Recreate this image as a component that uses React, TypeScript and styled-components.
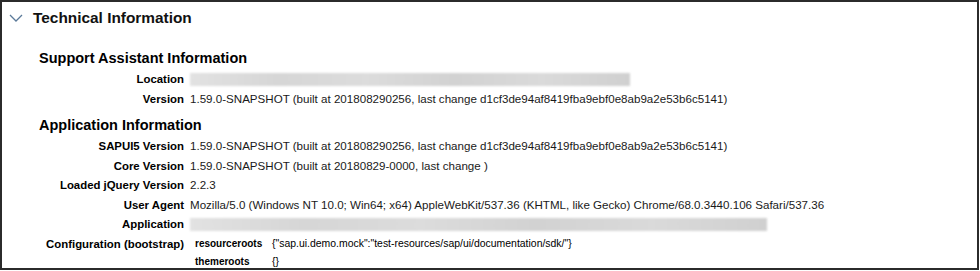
import React, { FC } from 'react';
import styled, { createGlobalStyle } from 'styled-components';

const GlobalStyle = createGlobalStyle`
  body {
    margin: 0;
    background: #ffffff;
    font-family: "Liberation Sans", Arial, sans-serif;
    color: #000000;
  }
`;

const Panel = styled.div`
  box-sizing: border-box;
  width: 979px;
  height: 270px;
  border: 2px solid #2b2b2b;
  background: #ffffff;
  overflow: hidden;
`;

const Header = styled.div`
  display: flex;
  align-items: center;
  height: 31px;
  padding-left: 7px;
  gap: 10px;
`;

const Title = styled.span`
  font-size: 15.4px;
  font-weight: bold;
  color: #111111;
`;

const Body = styled.div`
  padding-left: 37px;
`;

const SectionTitle = styled.div<{ top: number }>`
  font-size: 14.5px;
  font-weight: bold;
  line-height: 18px;
  margin-top: ${(props) => props.top}px;
  margin-bottom: 3px;
`;

const Grid = styled.div`
  display: grid;
  grid-template-columns: 145px auto;
  column-gap: 6px;
  align-items: center;
`;

const Label = styled.div<{ top?: boolean }>`
  font-size: 11.4px;
  font-weight: bold;
  text-align: right;
  line-height: 19.5px;
  white-space: nowrap;
  align-self: ${(props) => (props.top ? 'start' : 'center')};
`;

const Value = styled.div`
  font-size: 11.58px;
  line-height: 19.5px;
  color: #1a1a1a;
  white-space: nowrap;
`;

const Blur = styled.div<{ width: number }>`
  width: ${(props) => props.width}px;
  height: 13px;
  background: linear-gradient(
    90deg,
    #e2e2e2 0%,
    #d6d6d6 20%,
    #dcdcdc 40%,
    #d2d2d2 60%,
    #dadada 80%,
    #d0d0d0 100%
  );
  filter: blur(1px);
`;

const SubGrid = styled.div`
  display: grid;
  grid-template-columns: 77px auto;
  padding-left: 5px;
`;

const SubKey = styled.div`
  font-size: 10px;
  font-weight: bold;
  line-height: 18px;
`;

const SubValue = styled.div`
  font-size: 10.45px;
  line-height: 18px;
`;

const Chevron: FC = () => (
  <svg width="14" height="8" viewBox="0 0 14 8">
    <path d="M1 1 L7 7 L13 1" fill="none" stroke="#5b7a99" strokeWidth="1.3" />
  </svg>
);

const sapVersion =
  '1.59.0-SNAPSHOT (built at 201808290256, last change d1cf3de94af8419fba9ebf0e8ab9a2e53b6c5141)';

const App: FC = () => (
  <>
    <GlobalStyle />
    <Panel>
      <Header>
        <Chevron />
        <Title>Technical Information</Title>
      </Header>
      <Body>
        <SectionTitle top={16}>Support Assistant Information</SectionTitle>
        <Grid>
          <Label>Location</Label>
          <Value>
            <Blur width={440} />
          </Value>
          <Label>Version</Label>
          <Value>{sapVersion}</Value>
        </Grid>
        <SectionTitle top={7}>Application Information</SectionTitle>
        <Grid>
          <Label>SAPUI5 Version</Label>
          <Value>{sapVersion}</Value>
          <Label>Core Version</Label>
          <Value>1.59.0-SNAPSHOT (built at 20180829-0000, last change )</Value>
          <Label>Loaded jQuery Version</Label>
          <Value>2.2.3</Value>
          <Label>User Agent</Label>
          <Value>
            Mozilla/5.0 (Windows NT 10.0; Win64; x64) AppleWebKit/537.36 (KHTML, like Gecko)
            Chrome/68.0.3440.106 Safari/537.36
          </Value>
          <Label>Application</Label>
          <Value>
            <Blur width={577} />
          </Value>
          <Label top>Configuration (bootstrap)</Label>
          <SubGrid>
            <SubKey>resourceroots</SubKey>
            <SubValue>{'{"sap.ui.demo.mock":"test-resources/sap/ui/documentation/sdk/"}'}</SubValue>
            <SubKey>themeroots</SubKey>
            <SubValue>{'{}'}</SubValue>
          </SubGrid>
        </Grid>
      </Body>
    </Panel>
  </>
);

export default App;
